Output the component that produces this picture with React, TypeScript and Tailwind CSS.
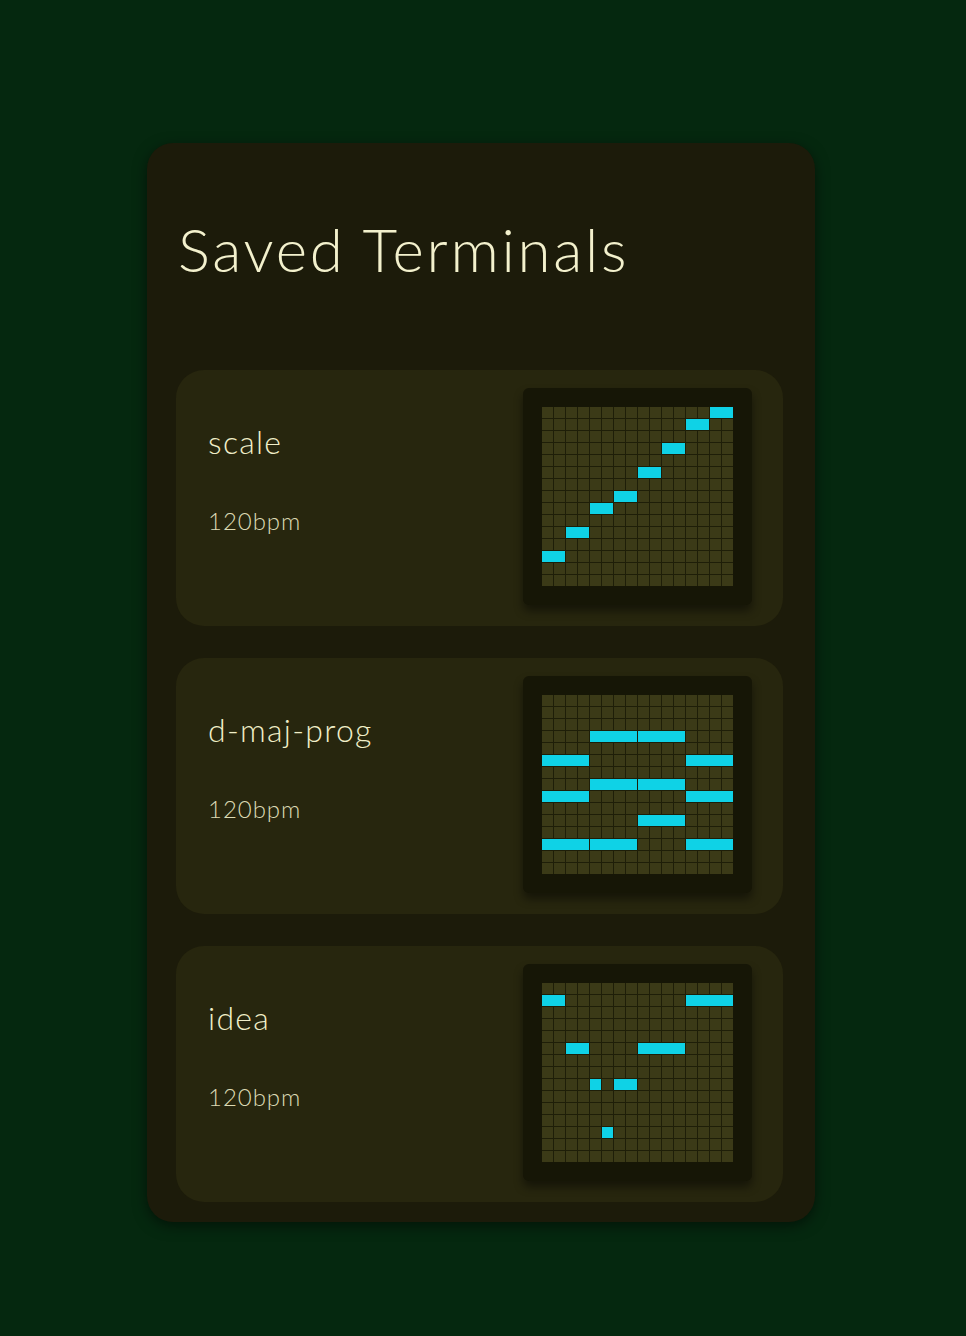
import React from "react";

type Note = { row: number; col: number; len: number };

const terminals: { name: string; bpm: number; notes: Note[] }[] = [
  {
    name: "scale",
    bpm: 120,
    notes: [
      { row: 0, col: 14, len: 2 },
      { row: 1, col: 12, len: 2 },
      { row: 3, col: 10, len: 2 },
      { row: 5, col: 8, len: 2 },
      { row: 7, col: 6, len: 2 },
      { row: 8, col: 4, len: 2 },
      { row: 10, col: 2, len: 2 },
      { row: 12, col: 0, len: 2 },
    ],
  },
  {
    name: "d-maj-prog",
    bpm: 120,
    notes: [
      { row: 3, col: 4, len: 4 },
      { row: 3, col: 8, len: 4 },
      { row: 5, col: 0, len: 4 },
      { row: 5, col: 12, len: 4 },
      { row: 7, col: 4, len: 4 },
      { row: 7, col: 8, len: 4 },
      { row: 8, col: 0, len: 4 },
      { row: 8, col: 12, len: 4 },
      { row: 10, col: 8, len: 4 },
      { row: 12, col: 0, len: 4 },
      { row: 12, col: 4, len: 4 },
      { row: 12, col: 12, len: 4 },
    ],
  },
  {
    name: "idea",
    bpm: 120,
    notes: [
      { row: 1, col: 0, len: 2 },
      { row: 1, col: 12, len: 4 },
      { row: 5, col: 2, len: 2 },
      { row: 5, col: 8, len: 4 },
      { row: 8, col: 4, len: 1 },
      { row: 8, col: 6, len: 2 },
      { row: 12, col: 5, len: 1 },
    ],
  },
];

const ROWS = 15;
const COLS = 16;

function PianoRoll({ notes }: { notes: Note[] }) {
  const cells = [];
  for (let r = 0; r < ROWS; r++) {
    for (let c = 0; c < COLS; c++) {
      cells.push(
        <div
          key={`${r}-${c}`}
          className="bg-[#3b3a17]"
          style={{ gridRow: r + 1, gridColumn: c + 1 }}
        />
      );
    }
  }
  return (
    <div className="mb-[4px] rounded-md bg-[#161606] p-[19px] shadow-[0_6px_10px_rgba(0,0,0,0.45)]">
      <div className="grid grid-cols-[repeat(16,11px)] grid-rows-[repeat(15,11px)] gap-px bg-[#1e1e08]">
        {cells}
        {notes.map((n, i) => (
          <div
            key={i}
            className="bg-[#0fd2e6]"
            style={{ gridRow: n.row + 1, gridColumn: `${n.col + 1} / span ${n.len}` }}
          />
        ))}
      </div>
    </div>
  );
}

export default function App() {
  return (
    <div
      className="min-h-screen w-full bg-[#05280f] pt-[143px] pb-[116px] pl-[147px]"
      style={{ fontFamily: "Lato, 'Noto Sans', sans-serif" }}
    >
      <div className="w-[668px] rounded-[26px] bg-[#1c1b0a] pl-[29px] pr-[32px] pb-[20px] shadow-[0_4px_14px_rgba(0,0,0,0.5)]">
        <h1 className="pt-[70px] pl-[2px] h-[227px] text-[60px] leading-[72px] font-light tracking-[0.045em] text-[#f3f1cd]">
          Saved Terminals
        </h1>

        <div className="flex flex-col gap-[32px]">
          {terminals.map((t) => (
            <div
              key={t.name}
              className="flex h-[256px] items-center justify-between rounded-[28px] bg-[#27260e] pl-[32px] pr-[31px]"
            >
              <div className="flex flex-col self-start pt-[52px]">
                <span className="text-[32px] leading-[40px] font-light tracking-[0.04em] text-[#f0eec8]">
                  {t.name}
                </span>
                <span className="mt-[44px] text-[24px] leading-[30px] font-light tracking-[0.04em] text-[#dcdab4]">
                  {t.bpm}bpm
                </span>
              </div>
              <PianoRoll notes={t.notes} />
            </div>
          ))}
        </div>
      </div>
    </div>
  );
}
